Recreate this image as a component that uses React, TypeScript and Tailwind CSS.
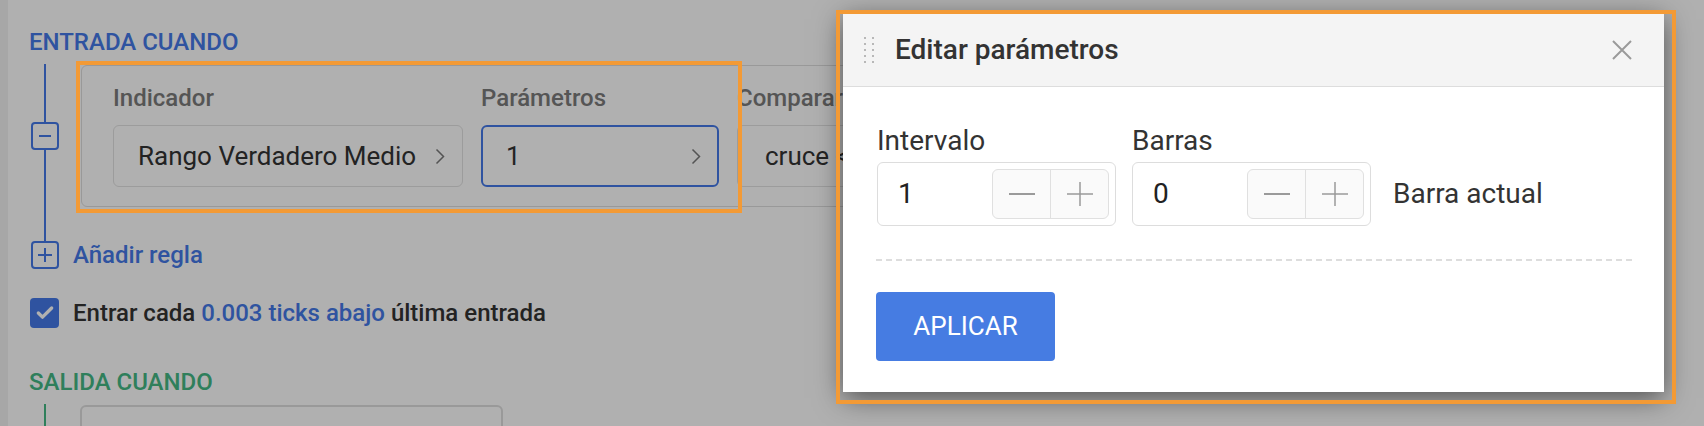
import { Check } from 'lucide-react'

const Chevron = () => (
  <svg width="10" height="17" viewBox="0 0 10 17" fill="none" stroke="#7a7a7a" strokeWidth="1.5">
    <path d="M1.5 1.5l7 7-7 7" />
  </svg>
)

function Stepper() {
  return (
    <div className="flex h-[50px] w-[117px] shrink-0 rounded-md border border-[#e0e0e0] bg-[#fafafa]">
      <button className="flex flex-1 items-center justify-center border-r border-[#e0e0e0]">
        <span className="h-[1.5px] w-[26px] bg-[#9a9a9a]" />
      </button>
      <button className="flex flex-1 items-center justify-center">
        <svg width="26" height="24" viewBox="0 0 26 24" stroke="#9a9a9a" strokeWidth="1.5">
          <path d="M0 12h26M13 0v24" />
        </svg>
      </button>
    </div>
  )
}

function NumberField({ label, value }: { label: string; value: string }) {
  return (
    <div className="flex flex-col">
      <label className="h-[32px] text-[28px] leading-[32px] text-[#333]">{label}</label>
      <div className="mt-[5px] flex h-[64px] w-[239px] items-center rounded-md border border-[#ddd] pl-5 pr-[6px]">
        <span className="flex-1 text-[28px] text-[#222]">{value}</span>
        <Stepper />
      </div>
    </div>
  )
}

export default function App() {
  return (
    <div className="relative h-[426px] w-[1704px] overflow-hidden bg-white font-['Roboto',sans-serif]">
      <div className="flex h-full">
        <div className="w-2 shrink-0 bg-[#f2f2f2]" />
        <div className="flex-1 pl-[21px] pt-[28px]">
          <h3 className="text-[24px] font-medium leading-[28px] text-[#4479e8]">ENTRADA CUANDO</h3>

          <div className="mt-2 flex">
            <div className="relative flex w-8 shrink-0 items-center justify-center pb-[34px]">
              <div className="absolute bottom-0 left-[15px] top-0 w-[2px] bg-[#4479e8]" />
              <button className="relative flex h-[28px] w-[28px] items-center justify-center rounded-[4px] border-2 border-[#4479e8] bg-white">
                <span className="h-[2px] w-[12px] bg-[#4479e8]" />
              </button>
            </div>
            <div className="mb-[34px] ml-5 mt-px flex shrink-0 gap-[18px] rounded-md border border-[#dedede] px-[31px] py-[19px]">
              <div className="flex w-[350px] flex-col gap-[14px]">
                <span className="h-[26px] text-[24px] font-medium leading-[26px] text-[#7b7b7b]">Indicador</span>
                <div className="flex h-[62px] items-center justify-between rounded-md border border-[#e2e2e2] pl-6 pr-[17px]">
                  <span className="text-[26px] text-[#333]">Rango Verdadero Medio</span>
                  <Chevron />
                </div>
              </div>
              <div className="flex w-[238px] flex-col gap-[14px]">
                <span className="h-[26px] text-[24px] font-medium leading-[26px] text-[#7b7b7b]">Parámetros</span>
                <div className="flex h-[62px] items-center justify-between rounded-md border-2 border-[#4479e8] pl-[23px] pr-[16px]">
                  <span className="text-[26px] text-[#333]">1</span>
                  <Chevron />
                </div>
              </div>
              <div className="flex w-[300px] flex-col gap-[14px]">
                <span className="h-[26px] text-[24px] font-medium leading-[26px] text-[#7b7b7b]">Comparar</span>
                <div className="flex h-[62px] items-center justify-between rounded-md border border-[#e2e2e2] pl-[27px] pr-[17px]">
                  <span className="text-[26px] text-[#333]">cruce &lt;</span>
                  <Chevron />
                </div>
              </div>
            </div>
          </div>

          <div className="flex h-[28px] items-center">
            <button className="ml-[2px] flex h-[28px] w-[28px] items-center justify-center rounded-[4px] border-2 border-[#4479e8] bg-white">
              <svg width="14" height="14" viewBox="0 0 14 14" stroke="#4479e8" strokeWidth="2">
                <path d="M0 7h14M7 0v14" />
              </svg>
            </button>
            <span className="ml-[14px] text-[24px] font-medium text-[#4479e8]">Añadir regla</span>
          </div>

          <div className="mt-[29px] flex h-[30px] items-center">
            <span className="ml-px flex h-[30px] w-[29px] items-center justify-center rounded-[4px] bg-[#4479e8]">
              <Check size={20} strokeWidth={4} color="white" />
            </span>
            <span className="ml-[14px] text-[24px] font-medium text-[#333]">
              Entrar cada <span className="text-[#4479e8]">0.003 ticks abajo</span> última entrada
            </span>
          </div>

          <h3 className="mt-10 text-[24px] font-medium leading-[28px] text-[#44b885]">SALIDA CUANDO</h3>
          <div className="mt-2 flex h-[60px]">
            <div className="relative w-8 shrink-0">
              <div className="absolute bottom-0 left-[15px] top-0 w-[2px] bg-[#44b885]" />
            </div>
            <div className="ml-[19px] mt-px h-[80px] w-[423px] rounded-md border-2 border-[#dedede]" />
          </div>
        </div>
      </div>

      <div className="absolute inset-0 bg-black/[0.31]" />

      <div className="absolute left-[843px] top-[13px] flex h-[379px] w-[821px] flex-col bg-white shadow-[0_6px_26px_rgba(0,0,0,0.55)]">
        <div className="flex h-[74px] shrink-0 items-center border-b border-[#ddd] bg-[#f4f4f4] pl-[21px] pr-[32px]">
          <div className="grid grid-cols-2 gap-x-[6px] gap-y-[4px]">
            {Array.from({ length: 10 }).map((_, i) => (
              <span key={i} className="h-[2px] w-[2px] bg-[#b8b8b8]" />
            ))}
          </div>
          <h2 className="ml-[21px] flex-1 text-[28px] font-medium text-[#333]">Editar parámetros</h2>
          <svg width="20" height="20" viewBox="0 0 20 20" stroke="#9a9a9a" strokeWidth="2">
            <path d="M1 1l18 18M19 1L1 19" />
          </svg>
        </div>

        <div className="pl-[33px] pr-[31px] pt-[38px]">
          <div className="flex items-end pl-px">
            <NumberField label="Intervalo" value="1" />
            <div className="ml-4">
              <NumberField label="Barras" value="0" />
            </div>
            <span className="ml-[22px] flex h-[64px] items-center text-[28px] text-[#333]">Barra actual</span>
          </div>
          <div className="mt-[33px] h-[2px] bg-[repeating-linear-gradient(90deg,#dddddd_0_6px,transparent_6px_10px)]" />
          <button className="mt-[31px] h-[69px] w-[179px] rounded-[4px] bg-[#467ce2] text-[26px] text-white">APLICAR</button>
        </div>
      </div>

      <div className="pointer-events-none absolute left-[76px] top-[61px] h-[152px] w-[666px] border-4 border-[#f39a35]" />
      <div className="pointer-events-none absolute left-[836px] top-[10px] h-[394px] w-[840px] border-4 border-[#f39a35]" />
    </div>
  )
}
